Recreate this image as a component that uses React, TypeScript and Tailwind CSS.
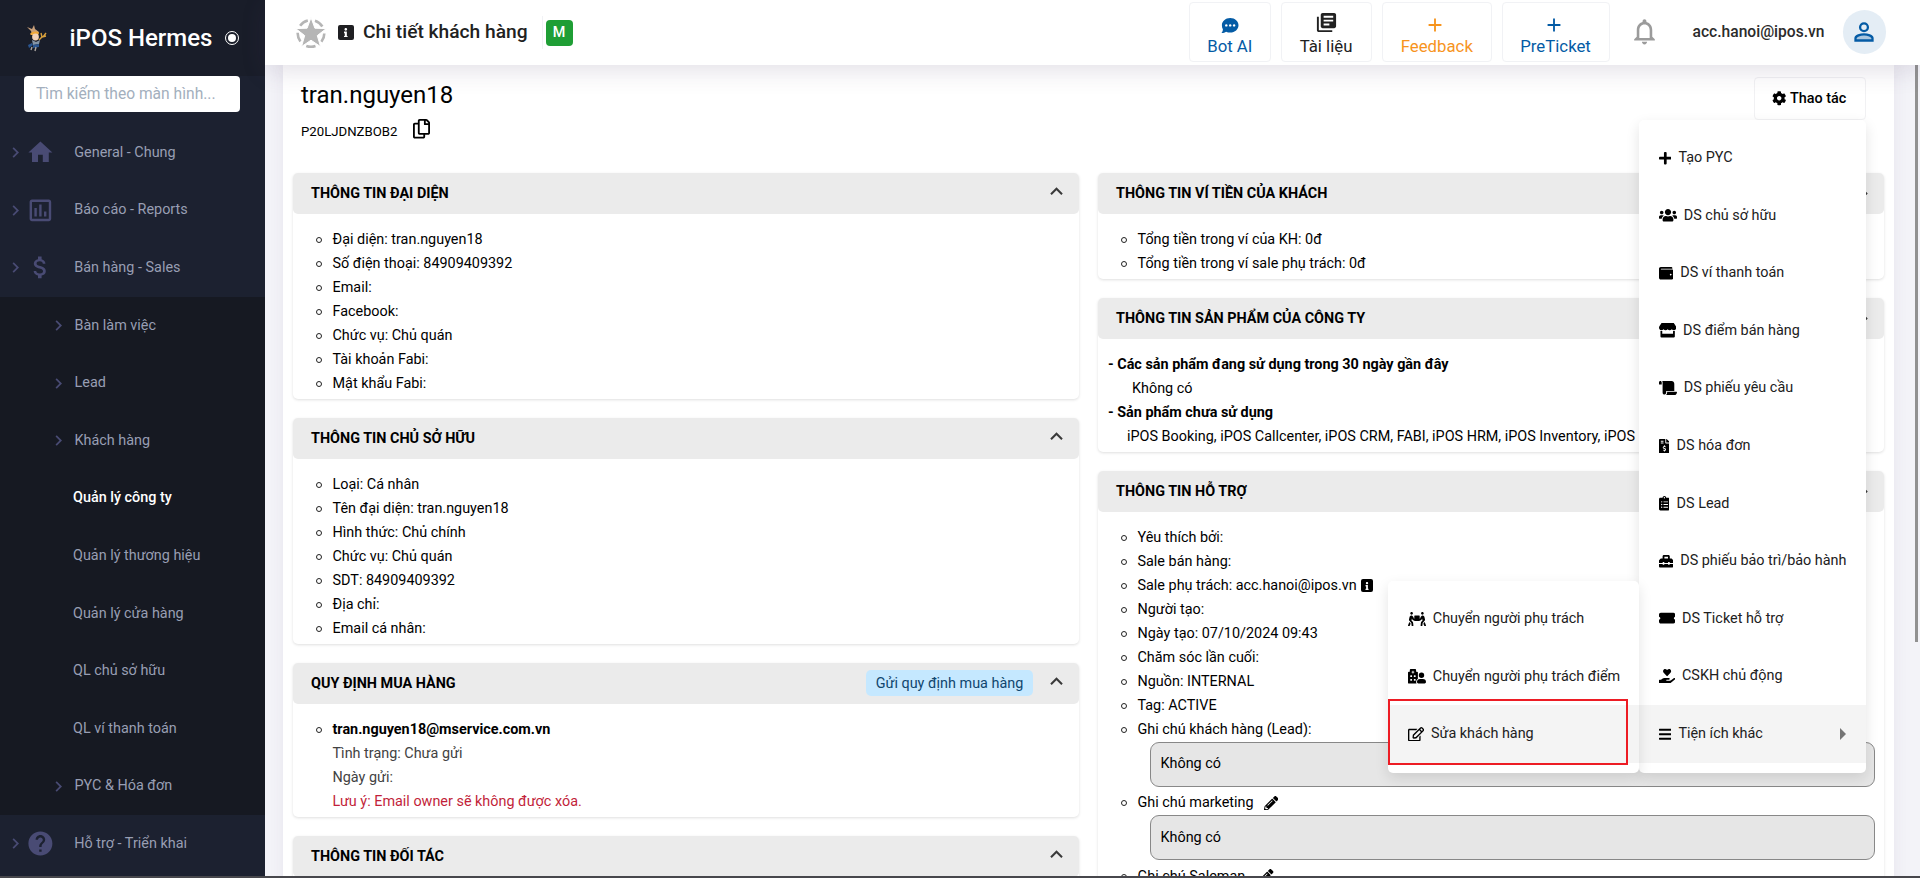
import React from 'react';
import {
  FaBars, FaClipboardList, FaCog, FaFileInvoiceDollar, FaHandHoldingHeart, FaHospitalUser, FaInfo,
  FaPencilAlt, FaPeopleCarry, FaPlus, FaRegCopy, FaRegEdit, FaScroll, FaStore, FaToolbox, FaUsers, FaWallet,
} from 'react-icons/fa';
import { FaTicketSimple } from 'react-icons/fa6';
import {
  MdAdd, MdAttachMoney, MdChevronRight, MdExpandLess, MdHelp, MdHome, MdLibraryBooks,
  MdNotificationsNone, MdOutlineAssessment,
} from 'react-icons/md';
import type { IconType } from 'react-icons';

function Logo() {
  return (
    <svg width="24" height="27" viewBox="0 0 24 27" className="shrink-0">
      <path d="M2 2l5 2 2-4 1 4 4 3-2 3-5-1-1-3z" fill="#c9a07a" />
      <path d="M5 9c2-3 8-3 9-1l-1 2-7 0z" fill="#f0a83a" />
      <circle cx="10.500" cy="12" r="3.400" fill="#f3d2ba" />
      <path d="M14 15l3-3 4-1M17 12l-1-4M18 12l3-4" stroke="#d9a13c" strokeWidth="1.400" fill="none" />
      <path d="M7 15l4 2 4-2-1 4-6 1z" fill="#8494a6" />
      <path d="M3 20l4-2 1 2-4 3zM8 20l6-1 0 3-6 1z" fill="#2a5590" />
      <path d="M7 22l-1 3M11 22l-1 4" stroke="#a9a4a0" strokeWidth="1.400" />
    </svg>
  );
}

function StarBadge() {
  return (
    <svg width="32" height="32" viewBox="0 0 32 32" className="shrink-0">
      <circle cx="16" cy="16.500" r="13.300" fill="none" stroke="#b5b5b5" strokeWidth="2.600" strokeDasharray="9.400 7.310" strokeDashoffset="-16.200" />
      <path d="M16 .5l3.900 10.700 11.400.4-9 7 3.200 11L16 23.200 6.500 29.600l3.200-11-9-7 11.400-.4z" fill="#b5b5b5" stroke="#fff" strokeWidth="1" />
    </svg>
  );
}

function InfoBox({ className }: { className: string }) {
  return (
    <span className={`inline-flex items-center justify-center rounded-[2px] ${className}`}>
      <FaInfo className="h-[62%] w-auto text-white" />
    </span>
  );
}

type NavItem = { label: string; icon: IconType };

function NavRow({ label, icon: Icon }: NavItem) {
  return (
    <li className="flex h-[57.6px] items-center">
      <MdChevronRight className="ml-[5px] size-[21px] shrink-0 text-[#494b74]" />
      <Icon className="size-[28.8px] shrink-0 text-[#494b74]" />
      <span className="ml-[19.5px]">{label}</span>
    </li>
  );
}

const topNav: NavItem[] = [
  { label: 'General - Chung', icon: MdHome },
  { label: 'Báo cáo - Reports', icon: MdOutlineAssessment },
  { label: 'Bán hàng - Sales', icon: MdAttachMoney },
];

const subNav: { label: string; group?: boolean; active?: boolean }[] = [
  { label: 'Bàn làm việc', group: true },
  { label: 'Lead', group: true },
  { label: 'Khách hàng', group: true },
  { label: 'Quản lý công ty', active: true },
  { label: 'Quản lý thương hiệu' },
  { label: 'Quản lý cửa hàng' },
  { label: 'QL chủ sở hữu' },
  { label: 'QL ví thanh toán' },
  { label: 'PYC & Hóa đơn', group: true },
];

function Sidebar() {
  return (
    <aside className="flex h-full w-[265px] shrink-0 flex-col bg-[#1c2130] text-[14.4px] text-[#989eb3]">
      <div className="flex h-[76px] shrink-0 items-center bg-[#191d29] pl-[25px]">
        <Logo />
        <span className="ml-[20.500px] text-[24px] font-medium whitespace-nowrap text-white">iPOS Hermes</span>
        <span className="ml-[13px] flex size-[14px] items-center justify-center rounded-full border-[1.500px] border-white">
          <span className="size-[8px] rounded-full bg-white" />
        </span>
      </div>
      <div className="mr-[25px] ml-6 flex h-9 shrink-0 items-center rounded-[4px] bg-white px-[12px] pt-[2px] text-[15.6px] text-[#a3afbd]">
        Tìm kiếm theo màn hình...
      </div>
      <ul className="mt-[11.900px] shrink-0">
        {topNav.map((n) => <NavRow key={n.label} {...n} />)}
      </ul>
      <ul className="shrink-0 bg-[#161922]">
        {subNav.map((n) => (
          <li key={n.label} className="flex h-[57.6px] items-center">
            {n.group ? (
              <>
                <MdChevronRight className="ml-[48px] size-[21px] shrink-0 text-[#494b74]" />
                <span className="ml-[5.500px]">{n.label}</span>
              </>
            ) : (
              <span className={n.active ? 'ml-[73px] font-medium text-white' : 'ml-[73px]'}>{n.label}</span>
            )}
          </li>
        ))}
      </ul>
      <ul className="shrink-0">
        <NavRow label="Hỗ trợ - Triển khai" icon={MdHelp} />
      </ul>
    </aside>
  );
}

function HeaderButton({ label, className, children }: { label: string; className: string; children: React.ReactNode }) {
  return (
    <button className={`flex h-[60px] flex-col items-center rounded-[4px] border border-[#f1f2f5] pt-[10px] text-[16.8px] leading-6 ${className}`}>
      <span className="flex h-[24px] items-center">{children}</span>
      <span className="-mt-[3px]">{label}</span>
    </button>
  );
}

function Header() {
  return (
    <header className="relative z-10 flex h-[65px] shrink-0 items-center bg-white pl-[30px] shadow-[0_6px_24px_rgba(82,63,105,0.16)]">
      <StarBadge />
      <InfoBox className="ml-[11px] h-[15.500px] w-[15.500px] bg-[#1f1f22]" />
      <h1 className="ml-[9.500px] text-[19.2px] font-medium text-[#212121]">Chi tiết khách hàng</h1>
      <span className="ml-[14px] h-[33px] w-px bg-[#f1f2f5]" />
      <span className="ml-[3px] flex h-[26px] w-[27px] items-center justify-center rounded-[4px] bg-[#1f9e35] text-[14.4px] font-medium text-white">M</span>
      <div className="mb-[1.500px] ml-auto flex items-center">
        <HeaderButton label="Bot AI" className="w-[82.500px] text-[#045ba5]">
          <svg width="18" height="16" viewBox="0 0 18 16" className="mt-[2px]">
            <path d="M9.200 0C14 0 17.500 3.300 17.500 7.300S14 14.600 9.200 14.600c-1.500 0-2.900-.3-4.100-.9-1.200.9-2.900 1.400-4.700 1.300 1-1 1.500-2.300 1.500-3.700C1.200 10.200.9 8.800.9 7.300.9 3.300 4.500 0 9.200 0z" fill="currentColor" />
            <circle cx="5.300" cy="7.400" r="1.200" fill="#fff" />
            <circle cx="9.200" cy="7.400" r="1.200" fill="#fff" />
            <circle cx="13.100" cy="7.400" r="1.200" fill="#fff" />
          </svg>
        </HeaderButton>
        <HeaderButton label="Tài liệu" className="ml-[9.500px] w-[91px] text-[#212121]">
          <MdLibraryBooks className="-mt-[4px] size-[23px]" />
        </HeaderButton>
        <HeaderButton label="Feedback" className="ml-[10px] w-[110.500px] text-[#f7941d]">
          <MdAdd className="mt-px mr-[4px] size-[22px]" />
        </HeaderButton>
        <HeaderButton label="PreTicket" className="ml-[9.500px] w-[108px] text-[#045ba5]">
          <MdAdd className="mt-px mr-[4px] size-[22px]" />
        </HeaderButton>
        <MdNotificationsNone className="ml-[19px] size-[31px] text-[#9b9b9b]" />
        <span className="mt-[1.500px] ml-[33px] text-[15.6px] font-medium text-[#2b2b2b]">acc.hanoi@ipos.vn</span>
        <span className="mr-[34px] ml-[18px] flex size-[43.500px] items-center justify-center rounded-full bg-[#e4edf5]">
          <svg width="20" height="20" viewBox="0 0 20 20">
            <circle cx="10" cy="5.200" r="3.900" fill="none" stroke="#045ba5" strokeWidth="2.300" />
            <path d="M1.500 18.500v-2.200c0-2.500 5-4 8.500-4s8.500 1.500 8.500 4v2.200z" fill="#a9c6df" stroke="#045ba5" strokeWidth="2.300" />
          </svg>
        </span>
      </div>
    </header>
  );
}

function Card({ title, action, children }: { title: string; action?: string; children?: React.ReactNode }) {
  return (
    <section className="mb-[19.2px] rounded-[5px] bg-white shadow-[0_1px_3px_rgba(0,0,0,0.13)]">
      <header className="flex h-[40.8px] items-start rounded-[5px] bg-[#ebebeb] pl-[18px] pr-[10px]">
        <h3 className="mt-[8.900px] text-[14.4px] leading-6 font-bold text-black">{title}</h3>
        <div className="ml-auto flex items-start">
          {action && (
            <button className="mt-[7px] mr-[11px] h-[26px] w-[167px] rounded-[5px] bg-[#c5e8ff] text-[14.4px] leading-[25px] text-[#10466e]">{action}</button>
          )}
          <MdExpandLess className="mt-[5.500px] size-[25px] text-[#3a3a3a]" />
        </div>
      </header>
      <div className="px-[10px] pt-[14px] pb-[3.100px] leading-6 whitespace-nowrap">{children}</div>
    </section>
  );
}

function Bullet({ children }: { children: React.ReactNode }) {
  return (
    <li className="flex h-6 items-center">
      <span className="mr-[11px] ml-[12.500px] size-[6px] shrink-0 rounded-full border border-[#222]" />
      {children}
    </li>
  );
}

function Bullets({ items }: { items: string[] }) {
  return <ul>{items.map((t, i) => <Bullet key={i}>{t}</Bullet>)}</ul>;
}

function Note() {
  return (
    <div className="-mr-px mb-[4.300px] ml-[41.500px] flex h-[45px] items-center rounded-[9px] border border-[#888] bg-[#e6e6e6] pl-[10px]">
      Không có
    </div>
  );
}

type MenuEntry = { label: string; icon: IconType; size: string; selected?: boolean; more?: boolean };

const actions: MenuEntry[] = [
  { label: 'Tạo PYC', icon: FaPlus, size: 'w-[12.6px]' },
  { label: 'DS chủ sở hữu', icon: FaUsers, size: 'w-[18px]' },
  { label: 'DS ví thanh toán', icon: FaWallet, size: 'w-[14.4px]' },
  { label: 'DS điểm bán hàng', icon: FaStore, size: 'w-[17.3px]' },
  { label: 'DS phiếu yêu cầu', icon: FaScroll, size: 'w-[18px]' },
  { label: 'DS hóa đơn', icon: FaFileInvoiceDollar, size: 'w-[10.8px]' },
  { label: 'DS Lead', icon: FaClipboardList, size: 'w-[10.8px]' },
  { label: 'DS phiếu bảo trì/bảo hành', icon: FaToolbox, size: 'w-[14.4px]' },
  { label: 'DS Ticket hỗ trợ', icon: FaTicketSimple, size: 'w-[16.2px]' },
  { label: 'CSKH chủ động', icon: FaHandHoldingHeart, size: 'w-[16.2px]' },
  { label: 'Tiện ích khác', icon: FaBars, size: 'w-[12.6px]', selected: true, more: true },
];

const utilities: MenuEntry[] = [
  { label: 'Chuyển người phụ trách', icon: FaPeopleCarry, size: 'w-[18px]' },
  { label: 'Chuyển người phụ trách điểm', icon: FaHospitalUser, size: 'w-[18px]' },
  { label: 'Sửa khách hàng', icon: FaRegEdit, size: 'w-[16.2px]', selected: true },
];

function MenuList({ items }: { items: MenuEntry[] }) {
  return (
    <ul className="pt-[9px]">
      {items.map(({ label, icon: Icon, size, selected, more }) => (
        <li key={label} className={`flex h-[57.6px] items-center pr-[20px] pl-[19.500px] whitespace-nowrap ${selected ? 'bg-[#f4f4f4]' : ''}`}>
          <Icon className={`h-[14.4px] shrink-0 text-black ${size}`} />
          <span className="ml-[7.300px] text-[14.4px] text-[#212121]">{label}</span>
          {more && (
            <svg width="6" height="12" viewBox="0 0 6 12" className="mt-[1px] ml-auto">
              <path d="M0 0l6 6-6 6z" fill="#757575" />
            </svg>
          )}
        </li>
      ))}
    </ul>
  );
}

const menuShadow = 'shadow-[0_5px_14px_rgba(0,0,0,0.11)]';

export default function App() {
  return (
    <div className="relative flex h-[878px] w-[1920px] flex-col overflow-hidden font-[Roboto,sans-serif] text-[14.4px] text-black">
      <div className="flex min-h-0 flex-1">
        <Sidebar />
        <div className="flex min-w-0 flex-1 flex-col">
          <Header />
          <div className="flex min-h-0 flex-1 overflow-hidden bg-[#f3f3f8]">
            <main className="ml-[18px] h-[900px] w-[1611px] bg-white px-[10px] pt-[12px] shadow-[0_0_14px_rgba(82,63,105,0.07)]">
              <div className="flex h-[96px] items-start justify-between">
                <div className="pl-[8px]">
                  <h2 className="text-[24px] leading-9">tran.nguyen18</h2>
                  <div className="mt-[5px] flex items-center">
                    <span className="mt-[4px] text-[13.2px]">P20LJDNZBOB2</span>
                    <FaRegCopy className="mb-[2px] ml-[15.500px] h-[19.500px] w-[17px]" />
                  </div>
                </div>
                <button className="mr-[18px] flex h-[43px] w-[112px] items-center justify-center rounded-[4px] border border-[#f1f1f3] pr-[2px] text-[14.4px] font-medium">
                  <FaCog className="mr-[4px] size-[14.4px]" />
                  Thao tác
                </button>
              </div>
              <div className="grid grid-cols-2 gap-x-[19px]">
                <div>
                  <Card title="THÔNG TIN ĐẠI DIỆN">
                    <Bullets items={['Đại diện: tran.nguyen18', 'Số điện thoại: 84909409392', 'Email:', 'Facebook:', 'Chức vụ: Chủ quán', 'Tài khoản Fabi:', 'Mật khẩu Fabi:']} />
                  </Card>
                  <Card title="THÔNG TIN CHỦ SỞ HỮU">
                    <Bullets items={['Loại: Cá nhân', 'Tên đại diện: tran.nguyen18', 'Hình thức: Chủ chính', 'Chức vụ: Chủ quán', 'SDT: 84909409392', 'Địa chỉ:', 'Email cá nhân:']} />
                  </Card>
                  <Card title="QUY ĐỊNH MUA HÀNG" action="Gửi quy định mua hàng">
                    <ul>
                      <Bullet><span className="font-bold">tran.nguyen18@mservice.com.vn</span></Bullet>
                    </ul>
                    <div className="pl-[29.500px] text-[#424242]">
                      <p>Tình trạng: Chưa gửi</p>
                      <p>Ngày gửi:</p>
                      <p className="text-[#c21f3a]">Lưu ý: Email owner sẽ không được xóa.</p>
                    </div>
                  </Card>
                  <Card title="THÔNG TIN ĐỐI TÁC" />
                </div>
                <div>
                  <Card title="THÔNG TIN VÍ TIỀN CỦA KHÁCH">
                    <Bullets items={['Tổng tiền trong ví của KH: 0đ', 'Tổng tiền trong ví sale phụ trách: 0đ']} />
                  </Card>
                  <Card title="THÔNG TIN SẢN PHẨM CỦA CÔNG TY">
                    <p className="font-bold">- Các sản phẩm đang sử dụng trong 30 ngày gần đây</p>
                    <p className="pl-[24px]">Không có</p>
                    <p className="font-bold">- Sản phẩm chưa sử dụng</p>
                    <p className="pl-[19px]">iPOS Booking, iPOS Callcenter, iPOS CRM, FABI, iPOS HRM, iPOS Inventory, iPOS</p>
                  </Card>
                  <Card title="THÔNG TIN HỖ TRỢ">
                    <Bullets items={['Yêu thích bởi:', 'Sale bán hàng:']} />
                    <ul>
                      <Bullet>Sale phụ trách: acc.hanoi@ipos.vn<InfoBox className="ml-[4px] h-[13px] w-[12.500px] bg-black" /></Bullet>
                    </ul>
                    <Bullets items={['Người tạo:', 'Ngày tạo: 07/10/2024 09:43', 'Chăm sóc lần cuối:', 'Nguồn: INTERNAL', 'Tag: ACTIVE', 'Ghi chú khách hàng (Lead):']} />
                    <Note />
                    <ul><Bullet>Ghi chú marketing<FaPencilAlt className="ml-[10px] size-[14.4px]" /></Bullet></ul>
                    <Note />
                    <ul><Bullet>Ghi chú Saleman<FaPencilAlt className="ml-[14px] size-[14.4px]" /></Bullet></ul>
                  </Card>
                </div>
              </div>
            </main>
            <div className="mr-[2px] ml-auto h-[577px] w-[3px] bg-[#919191]" />
          </div>
        </div>
      </div>
      <div className="z-20 h-[2px] shrink-0 bg-[#47474c]" />

      <div className={`absolute top-[120px] left-[1639px] h-[653px] w-[227px] rounded-[5px] bg-white ${menuShadow}`}>
        <MenuList items={actions} />
      </div>
      <div className={`absolute top-[581px] left-[1388px] h-[191.500px] w-[251px] rounded-[5px] bg-white ${menuShadow}`}>
        <MenuList items={utilities} />
      </div>
      <div className="absolute top-[699px] left-[1388px] h-[66px] w-[240px] border-2 border-[#ed1c24]" />
    </div>
  );
}
